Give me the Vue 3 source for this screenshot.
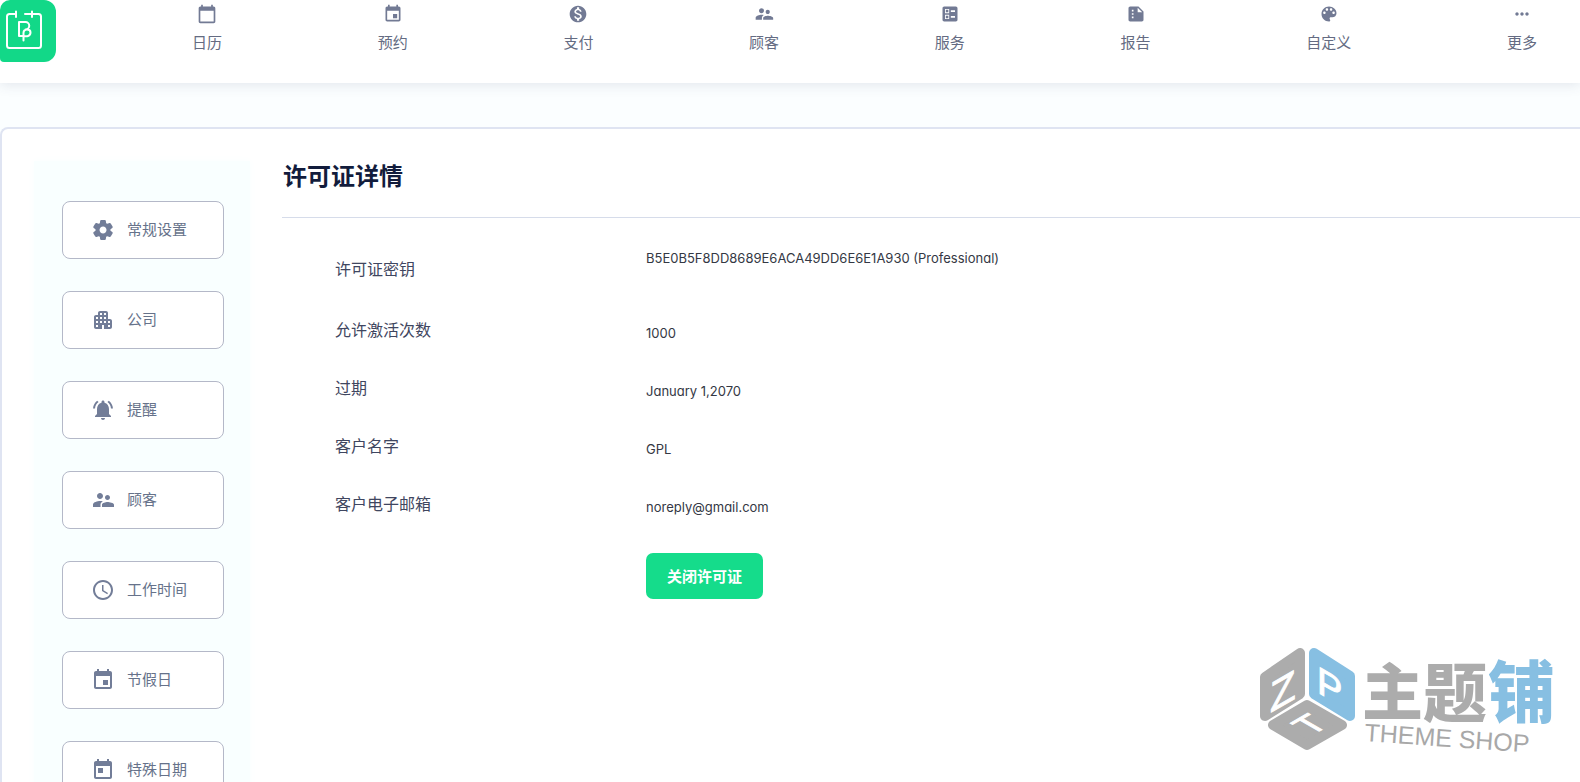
<script setup>
const icons = {
  calendar: 'M20 3h-1V1h-2v2H7V1H5v2H4c-1.1 0-2 .9-2 2v16c0 1.1.9 2 2 2h16c1.1 0 2-.9 2-2V5c0-1.1-.9-2-2-2zm0 18H4V8h16v13z',
  event: 'M17 12h-5v5h5v-5zM16 1v2H8V1H6v2H5c-1.11 0-1.99.9-1.99 2L3 19c0 1.1.89 2 2 2h14c1.1 0 2-.9 2-2V5c0-1.1-.9-2-2-2h-1V1h-2zm3 18H5V8h14v11z',
  today: 'M19 3h-1V1h-2v2H8V1H6v2H5c-1.11 0-1.99.9-1.99 2L3 19c0 1.1.89 2 2 2h14c1.1 0 2-.9 2-2V5c0-1.1-.9-2-2-2zm0 16H5V8h14v11zM7 10h5v5H7z',
  payment: 'M12 2C6.48 2 2 6.48 2 12s4.48 10 10 10 10-4.48 10-10S17.52 2 12 2zm1.41 16.09V20h-2.67v-1.93c-1.71-.36-3.16-1.46-3.27-3.4h1.96c.1 1.05.82 1.87 2.65 1.87 1.96 0 2.4-.98 2.4-1.59 0-.83-.44-1.61-2.67-2.14-2.48-.6-4.18-1.62-4.18-3.67 0-1.72 1.39-2.84 3.11-3.21V4h2.67v1.95c1.86.45 2.79 1.86 2.85 3.39H14.3c-.05-1.11-.64-1.87-2.22-1.87-1.5 0-2.4.68-2.4 1.64 0 .84.65 1.39 2.67 1.91s4.18 1.39 4.18 3.91c-.01 1.83-1.38 2.83-3.12 3.16z',
  people: 'M16.5 12c1.38 0 2.49-1.12 2.49-2.5S17.88 7 16.5 7C15.12 7 14 8.12 14 9.5s1.12 2.5 2.5 2.5zM9 11c1.66 0 2.99-1.34 2.99-3S10.66 5 9 5C7.34 5 6 6.34 6 8s1.34 3 3 3zm7.5 3c-1.83 0-5.5.92-5.5 2.75V19h12v-2.25c0-1.83-4.67-2.75-6.5-2.75zM9 13c-2.33 0-7 1.17-7 3.5V19h7.5v-2.25c0-.85.33-2.34 2.37-3.47C10.5 13.1 9.66 13 9 13z',
  services: 'M13 9.5h5v-2h-5v2zm0 7h5v-2h-5v2zM19 21H5c-1.1 0-2-.9-2-2V5c0-1.1.9-2 2-2h14c1.1 0 2 .9 2 2v14c0 1.1-.9 2-2 2zM6 11h5V6H6v5zm1-4h3v3H7V7zM6 18h5v-5H6v5zm1-4h3v3H7v-3z',
  report: 'M15 3H5c-1.1 0-2 .9-2 2v14c0 1.1.9 2 2 2h14c1.1 0 2-.9 2-2V9l-6-6zM7 7h2v2H7V7zm0 4h2v2H7v-2zm0 4h2v2H7v-2zm7-10.5L19.5 10H14V4.5z',
  palette: 'M12 3c-4.97 0-9 4.03-9 9s4.03 9 9 9c.83 0 1.5-.67 1.5-1.5 0-.39-.15-.74-.39-1.01-.23-.26-.38-.61-.38-.99 0-.83.67-1.5 1.5-1.5H16c2.76 0 5-2.24 5-5 0-4.42-4.03-8-9-8zm-5.5 9c-.83 0-1.5-.67-1.5-1.5S5.67 9 6.5 9 8 9.67 8 10.5 7.33 12 6.5 12zm3-4C8.67 8 8 7.33 8 6.5S8.67 5 9.5 5s1.5.67 1.5 1.5S10.33 8 9.5 8zm5 0c-.83 0-1.5-.67-1.5-1.5S13.67 5 14.5 5s1.5.67 1.5 1.5S15.33 8 14.5 8zm3 4c-.83 0-1.5-.67-1.5-1.5S16.67 9 17.5 9s1.5.67 1.5 1.5-.67 1.5-1.5 1.5z',
  more: 'M6 10c-1.1 0-2 .9-2 2s.9 2 2 2 2-.9 2-2-.9-2-2-2zm12 0c-1.1 0-2 .9-2 2s.9 2 2 2 2-.9 2-2-.9-2-2-2zm-6 0c-1.1 0-2 .9-2 2s.9 2 2 2 2-.9 2-2-.9-2-2-2z',
  settings: 'M19.5 12c0-.23-.01-.45-.03-.68l1.86-1.41c.4-.3.51-.86.26-1.3l-1.87-3.23c-.25-.44-.79-.62-1.25-.42l-2.15.91c-.37-.26-.76-.49-1.17-.68l-.29-2.31C14.8 2.38 14.37 2 13.87 2h-3.73c-.51 0-.94.38-1 .88l-.29 2.31c-.41.19-.8.42-1.17.68l-2.15-.91c-.46-.2-1-.02-1.25.42L2.41 8.62c-.25.44-.14.99.26 1.3l1.86 1.41c-.02.22-.03.44-.03.67s.01.45.03.68l-1.86 1.41c-.4.3-.51.86-.26 1.3l1.87 3.23c.25.44.79.62 1.25.42l2.15-.91c.37.26.76.49 1.17.68l.29 2.31c.06.5.49.88.99.88h3.73c.5 0 .93-.38.99-.88l.29-2.31c.41-.19.8-.42 1.17-.68l2.15.91c.46.2 1 .02 1.25-.42l1.87-3.23c.25-.44.14-.99-.26-1.3l-1.86-1.41c.03-.23.04-.45.04-.68zm-7.46 3.5c-1.93 0-3.5-1.57-3.5-3.5s1.57-3.5 3.5-3.5 3.5 1.57 3.5 3.5-1.57 3.5-3.5 3.5z',
  company: 'M17 11V5c0-1.1-.9-2-2-2H9c-1.1 0-2 .9-2 2v2H5c-1.1 0-2 .9-2 2v10c0 1.1.9 2 2 2h6v-4h2v4h6c1.1 0 2-.9 2-2v-6c0-1.1-.9-2-2-2h-2zM7 19H5v-2h2v2zm0-4H5v-2h2v2zm0-4H5V9h2v2zm4 4H9v-2h2v2zm0-4H9V9h2v2zm0-4H9V5h2v2zm4 8h-2v-2h2v2zm0-4h-2V9h2v2zm0-4h-2V5h2v2zm4 12h-2v-2h2v2zm0-4h-2v-2h2v2z',
  bell: 'M7.58 4.08L6.15 2.65C3.75 4.48 2.17 7.3 2.03 10.5h2c.15-2.65 1.51-4.97 3.55-6.42zm12.39 6.42h2c-.15-3.2-1.73-6.02-4.12-7.85l-1.42 1.43c2.02 1.45 3.39 3.77 3.54 6.42zM18 11c0-3.07-1.64-5.64-4.5-6.32V4c0-.83-.67-1.5-1.5-1.5s-1.5.67-1.5 1.5v.68C7.63 5.36 6 7.92 6 11v5l-2 2v1h16v-1l-2-2v-5zm-6 11c1.1 0 2-.9 2-2h-4c0 1.1.9 2 2 2z',
  clock: 'M11.99 2C6.47 2 2 6.48 2 12s4.47 10 9.99 10C17.52 22 22 17.52 22 12S17.52 2 11.99 2zM12 20c-4.42 0-8-3.58-8-8s3.58-8 8-8 8 3.58 8 8-3.58 8-8 8zm.5-13H11v6l5.25 3.15.75-1.23-4.5-2.67V7z'
}

const navItems = [
  { label: '日历', icon: 'calendar' },
  { label: '预约', icon: 'event' },
  { label: '支付', icon: 'payment' },
  { label: '顾客', icon: 'people' },
  { label: '服务', icon: 'services' },
  { label: '报告', icon: 'report' },
  { label: '自定义', icon: 'palette' },
  { label: '更多', icon: 'more' }
]

const settings = [
  { label: '常规设置', icon: 'settings' },
  { label: '公司', icon: 'company' },
  { label: '提醒', icon: 'bell' },
  { label: '顾客', icon: 'people' },
  { label: '工作时间', icon: 'clock' },
  { label: '节假日', icon: 'event' },
  { label: '特殊日期', icon: 'today' }
]

const details = [
  { label: '许可证密钥', value: 'B5E0B5F8DD8689E6ACA49DD6E6E1A930 (Professional)' },
  { label: '允许激活次数', value: '1000' },
  { label: '过期', value: 'January 1,2070' },
  { label: '客户名字', value: 'GPL' },
  { label: '客户电子邮箱', value: 'noreply@gmail.com' }
]
</script>

<template>
  <div class="page">
    <header class="topbar">
      <a class="logo" href="#" aria-label="首页">
        <svg viewBox="0 0 56 62" fill="none" stroke="#fff" stroke-width="2" stroke-linecap="round" stroke-linejoin="round">
          <path d="M16 14H9.5a2.500 2.500 0 0 0-2.500 2.500v29a2.500 2.500 0 0 0 2.500 2.500h29a2.500 2.500 0 0 0 2.500-2.500v-29a2.500 2.500 0 0 0-2.500-2.500H25M16 11.500v5.500M32 11.500v5.500" />
          <path d="M19 36V22h6.500a3.500 3.500 0 0 1 0 7.500M19 36h4.500M23.500 40.500v-7.500c0-5 7-4.500 7-.5s-4 4-7 3.500" />
        </svg>
      </a>
      <nav class="nav">
        <a v-for="item in navItems" :key="item.label" class="nav-item" href="#">
          <svg class="nav-icon" viewBox="0 0 24 24"><path :d="icons[item.icon]" fill-rule="evenodd" /></svg>
          <span>{{ item.label }}</span>
        </a>
      </nav>
    </header>

    <main class="card">
      <aside class="sidebar">
        <button v-for="item in settings" :key="item.label" class="side-item" type="button">
          <svg class="side-icon" viewBox="0 0 24 24"><path :d="icons[item.icon]" fill-rule="evenodd" /></svg>
          <span>{{ item.label }}</span>
        </button>
      </aside>

      <section class="content">
        <h1>许可证详情</h1>
        <dl class="details">
          <div v-for="row in details" :key="row.label" class="row">
            <dt>{{ row.label }}</dt>
            <dd>{{ row.value }}</dd>
          </div>
        </dl>
        <button class="deactivate" type="button">关闭许可证</button>
      </section>
    </main>

    <svg class="brand" viewBox="0 0 320 130">
      <g stroke-linejoin="round" stroke-width="10">
        <path d="M6 42L41 18V59L6 81Z" fill="#acacac" stroke="#acacac" />
        <path d="M55 18L91 41V81L55 59Z" fill="#87bfe2" stroke="#87bfe2" />
        <path d="M14 90L48 70L83 90L48 110Z" fill="#acacac" stroke="#acacac" />
      </g>
      <g class="cube-letters">
        <text transform="translate(11 78) skewY(-30)" font-size="42">Z</text>
        <text transform="translate(58 57) skewY(30)" font-size="38">P</text>
        <text transform="matrix(0.87 -0.5 0.87 0.5 52 101)" font-size="36">T</text>
      </g>
      <g class="brand-name">
        <text x="103" y="80" font-size="61">主</text>
        <text x="164" y="81" font-size="64">题</text>
        <text x="229" y="82" font-size="67" class="blue">铺</text>
      </g>
      <text class="brand-sub" transform="translate(105 106) rotate(4)">THEME SHOP</text>
    </svg>
  </div>
</template>

<style>
html,
body {
  background: #fafdfe;
}
</style>

<style scoped>
.page {
  position: relative;
  display: flex;
  flex-direction: column;
  gap: 44px;
  height: 100vh;
  overflow: hidden;
  background: #fbfeff;
  font-family: Inter, "Noto Sans CJK SC", sans-serif;
  color: #3f4660;
}

.topbar {
  display: flex;
  flex: none;
  align-items: flex-start;
  height: 83px;
  padding-right: 43px;
  background: #fff;
  box-shadow: 0 2px 12px rgba(60, 70, 110, 0.13);
}

.logo {
  display: block;
  flex: none;
  width: 56px;
  height: 62px;
  border-radius: 10px 12px 12px 4px;
  background: #12d888;
}

.logo svg {
  display: block;
  width: 100%;
  height: 100%;
}

.nav {
  display: flex;
  flex: 1;
  justify-content: space-between;
  margin-left: 136px;
  padding-top: 4px;
}

.nav-item {
  display: flex;
  flex-direction: column;
  align-items: center;
  gap: 9px;
  color: #646b82;
  font-size: 15px;
  line-height: 20px;
  text-decoration: none;
}

.nav-icon {
  width: 20px;
  height: 20px;
  fill: #727a94;
}

.card {
  display: flex;
  flex: 1;
  align-items: flex-start;
  gap: 32px;
  min-height: 0;
  padding: 32px 0 0 32px;
  border: 2px solid #dfe4f2;
  border-right: 0;
  border-bottom: 0;
  border-radius: 8px 0 0 0;
  background: #fff;
}

.sidebar {
  display: flex;
  flex: none;
  flex-direction: column;
  gap: 32px;
  padding: 40px 26px 40px 28px;
  background: #f9ffff;
  box-shadow: 0 0 8px #f9ffff;
}

.side-item {
  display: flex;
  align-items: center;
  gap: 12px;
  width: 162px;
  height: 58px;
  padding: 0 0 0 28px;
  border: 1px solid #b4b8c8;
  border-radius: 8px;
  background: #fff;
  color: #66728a;
  font: inherit;
  font-size: 15px;
}

.side-item span {
  padding-bottom: 3px;
}

.side-icon {
  width: 24px;
  height: 24px;
  fill: #727d98;
}

.content {
  flex: 1;
  min-width: 0;
}

h1 {
  margin: 0;
  padding: 0 0 24px 1px;
  border-bottom: 1px solid #d6dcea;
  color: #121c3c;
  font-size: 24px;
  font-weight: 700;
  line-height: 32px;
}

.details {
  display: grid;
  gap: 34px;
  margin: 0;
  padding: 27px 0 37px 53px;
}

.row {
  display: grid;
  grid-template-columns: 311px 1fr;
  line-height: 24px;
}

dt {
  font-size: 16px;
}

dd {
  margin: 0;
  padding-top: 6px;
  color: #343844;
  font-size: 13px;
  line-height: 18px;
  font-feature-settings: "cv11";
}

.row:first-child {
  padding-bottom: 3px;
}

.row:first-child dt {
  padding-top: 12px;
}

.row:first-child dd {
  padding-top: 4px;
}

.deactivate {
  height: 46px;
  margin-left: 364px;
  padding: 0 21px 2px;
  border: 0;
  border-radius: 7px;
  background: #15dc8b;
  color: #fff;
  font: inherit;
  font-size: 15px;
  font-weight: 700;
}

.brand {
  position: absolute;
  right: 1px;
  bottom: 17px;
  width: 320px;
  height: 130px;
  overflow: visible;
}

.cube-letters {
  fill: #fff;
  stroke: #fff;
  stroke-width: 1;
  font-family: "Liberation Sans", sans-serif;
}

.brand-name {
  fill: #acacac;
  font-family: "Noto Sans CJK SC", sans-serif;
  font-weight: 900;
}

.brand-name .blue {
  fill: #87bfe2;
}

.brand-sub {
  fill: #a8a8a8;
  font-family: "Liberation Sans", sans-serif;
  font-size: 25px;
}
</style>
